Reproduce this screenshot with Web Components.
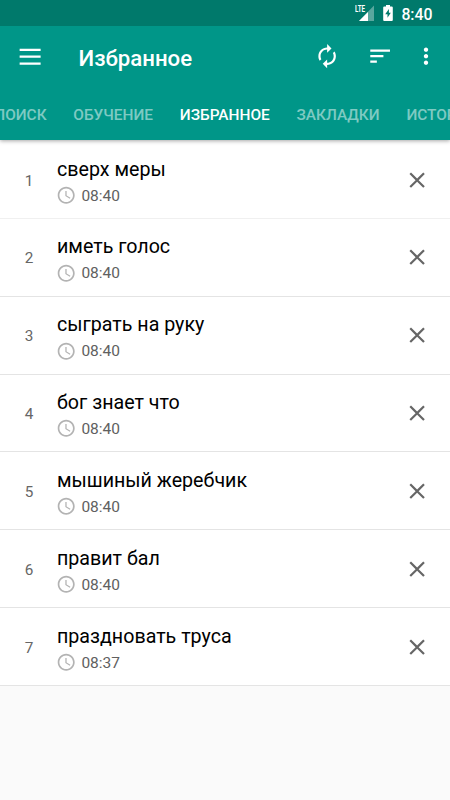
<!DOCTYPE html>
<html lang="ru">
<head>
<meta charset="utf-8">
<title>Избранное</title>
<style>
html,body{margin:0;height:100%;overflow:hidden}
body{background:#fafafa;font-family:Roboto,"Noto Sans",sans-serif}
</style>
</head>
<body>
<favorites-app></favorites-app>
<script>
const icons = {
  menu: '<path d="M2.4 5.200h19.2v2H2.4zM2.4 11.500h19.2v2H2.4zM2.4 17.800h19.2v2H2.4z"/>',
  sync: '<path d="M12 6v3l4-4-4-4v3c-4.42 0-8 3.58-8 8 0 1.57.46 3.03 1.24 4.26L6.7 14.8c-.45-.83-.7-1.79-.7-2.8 0-3.31 2.69-6 6-6zm6.76 1.74L17.3 9.2c.44.84.7 1.79.7 2.8 0 3.31-2.69 6-6 6v-3l-4 4 4 4v-3c4.42 0 8-3.58 8-8 0-1.57-.46-3.03-1.24-4.26z"/>',
  sort: '<path d="M3 18h6v-2H3v2zM3 6v2h18V6H3zm0 7h12v-2H3v2z"/>',
  more: '<path d="M12 8c1.1 0 2-.9 2-2s-.9-2-2-2-2 .9-2 2 .9 2 2 2zm0 2c-1.1 0-2 .9-2 2s.9 2 2 2 2-.9 2-2-.9-2-2-2zm0 6c-1.1 0-2 .9-2 2s.9 2 2 2 2-.9 2-2-.9-2-2-2z"/>',
  close: '<path d="M19 6.41L17.59 5 12 10.59 6.41 5 5 6.41 10.59 12 5 17.59 6.41 19 12 13.41 17.59 19 19 17.59 13.41 12z"/>',
  clock: '<path d="M11.99 2C6.47 2 2 6.48 2 12s4.47 10 9.99 10C17.52 22 22 17.52 22 12S17.52 2 11.99 2zM12 20c-4.42 0-8-3.58-8-8s3.58-8 8-8 8 3.58 8 8-3.58 8-8 8zm.5-13H11v6l5.25 3.15.75-1.23-4.5-2.67z"/>'
};
function element(name, render) {
  customElements.define(name, class extends HTMLElement {
    connectedCallback() {
      if (this.shadowRoot) return;
      this.attachShadow({mode: 'open'}).innerHTML = render(this);
    }
  });
}

element('ui-icon', el => `<style>:host{display:block;flex:none;width:26.25px;height:26.25px}svg{display:block;width:100%;height:100%;fill:currentColor}</style>
<svg viewBox="0 0 24 24">${icons[el.getAttribute('name')]}</svg>`);

element('status-bar', () => `<style>
:host{display:flex;height:26px;box-sizing:border-box;padding-right:17.5px;justify-content:flex-end;align-items:center;background:#00796b;color:#fff;font-size:15.8px;font-weight:500;line-height:26px}
svg{display:block;flex:none}.signal{margin-right:8.5px}.battery{margin-right:8px}
.lte{font:700 9px Roboto,sans-serif}span{padding-top:3px}
</style>
<svg class="signal" width="20" height="26" viewBox="0 0 20 26" fill="#fff"><path d="M19 5.5V21H4z" opacity=".35"/><path d="M13 12v9H4z"/><text class="lte" x="0" y="12" textLength="10" lengthAdjust="spacingAndGlyphs">LTE</text></svg>
<svg class="battery" width="10" height="26" viewBox="0 0 10 26" fill="#fff"><path fill-rule="evenodd" d="M3 5h4v1.5h1.7q1.1 0 1.1 1v12.5q0 1-1 1H1.2q-1 0-1-1V7.5q0-1 1.1-1H3zM5.9 9l-3.700 5.300h2.300v3.500L7.800 12.800H5.900z"/></svg>
<span>8:40</span>`);

element('app-toolbar', () => `<style>
:host{display:flex;align-items:center;height:61px;box-sizing:border-box;padding:0 11px 0 17.3px;color:#fff}
h1{margin:0 auto 0 35px;font-size:22.2px;line-height:26px;font-weight:500;padding-top:2px}
.sort{margin:0 20.2px 0 26.3px}.more{width:26px}
</style><ui-icon name="menu"></ui-icon><h1><slot></slot></h1><ui-icon name="sync"></ui-icon><ui-icon class="sort" name="sort"></ui-icon><ui-icon class="more" name="more"></ui-icon>`);

element('tab-item', () => `<style>:host{display:block;flex:none;padding:0 13.4px;font-size:15.4px;font-weight:500;line-height:56px;color:rgba(255,255,255,.5)}:host([selected]){color:#fff}</style><slot></slot>`);
element('tab-strip', () => `<style>:host{display:flex;height:53px;overflow:hidden}slot::slotted(:first-child){margin-left:-19.2px}</style><slot></slot>`);

element('phrase-row', el => `<style>
:host{display:flex;height:77.85px;box-sizing:border-box;border-bottom:1px solid #e4e4e4;background:#fff;align-items:center;padding-right:19.5px}
.number{width:57px;padding-left:1px;box-sizing:border-box;text-align:center;font-size:15.3px;color:#666;padding-top:2.2px}
.content{flex:1;padding-top:4.7px}.phrase{color:#000;font-size:19.65px;line-height:26px}
.meta{display:flex;align-items:center;height:24px;margin-top:.5px;gap:5px;color:#606060;font-size:15.5px;margin-left:-1px}
.meta ui-icon{width:20.4px;height:20.4px;color:#b3b3b3}.meta span{padding-top:1px}.close{color:#666;margin-top:.6px}
</style><div class="number">${el.getAttribute('number')}</div><div class="content"><div class="phrase"><slot></slot></div><div class="meta"><ui-icon name="clock"></ui-icon><span>${el.getAttribute('time')}</span></div></div><ui-icon class="close" name="close"></ui-icon>`);

element('favorites-app', () => `<style>
:host{display:block;height:100%;background:#fafafa}
header{position:relative;background:#009688;box-shadow:0 1px 4px rgba(0,0,0,.35)}
main{padding-top:1px;background:#fff;height:545px}
phrase-row:first-child{border-bottom-color:#f0f0f0}
</style>
<header><status-bar></status-bar><app-toolbar>Избранное</app-toolbar>
<tab-strip><tab-item>ПОИСК</tab-item><tab-item>ОБУЧЕНИЕ</tab-item><tab-item selected>ИЗБРАННОЕ</tab-item><tab-item>ЗАКЛАДКИ</tab-item><tab-item>ИСТОРИЯ</tab-item></tab-strip></header>
<main>${['сверх меры','иметь голос','сыграть на руку','бог знает что','мышиный жеребчик','правит бал','праздновать труса'].map((t,i)=>`<phrase-row number="${i+1}" time="${i===6?'08:37':'08:40'}">${t}</phrase-row>`).join('')}</main>`);
</script>
</body>
</html>
